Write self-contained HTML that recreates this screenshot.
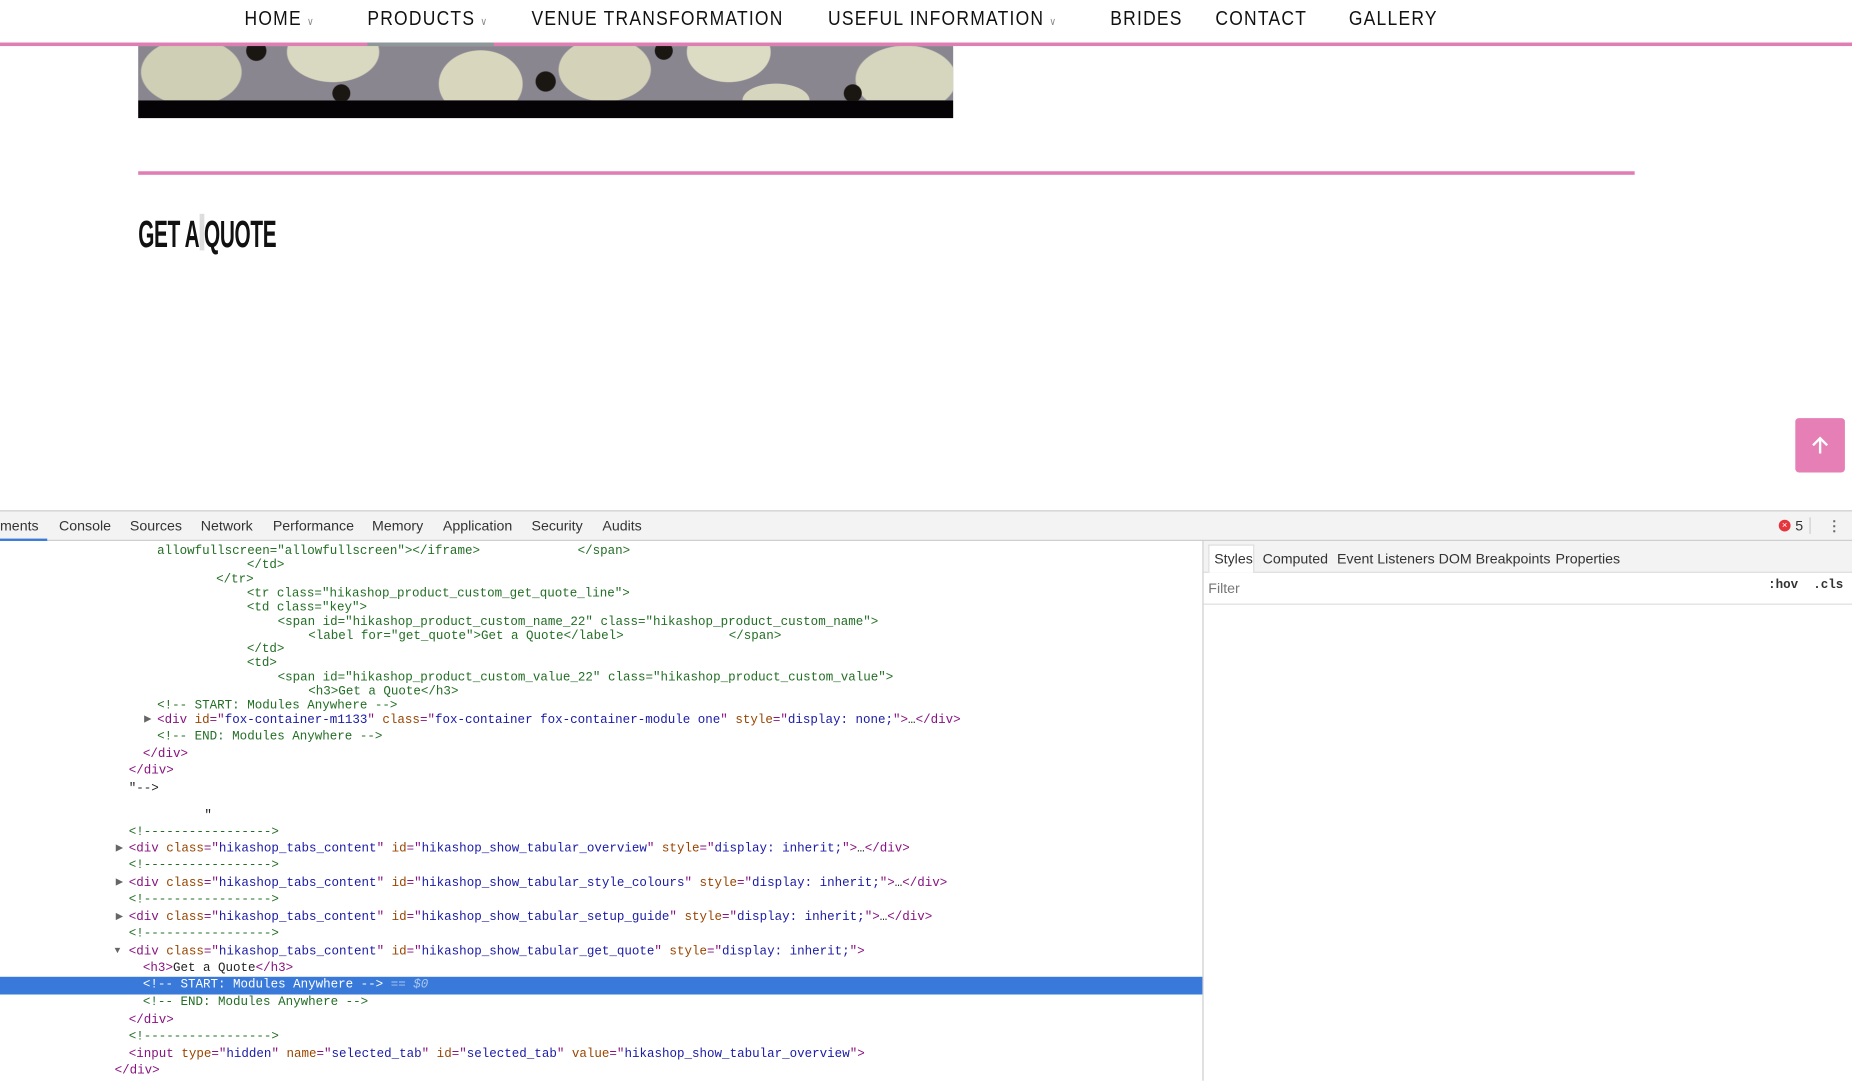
<!DOCTYPE html>
<html><head><meta charset="utf-8">
<style>
html,body{margin:0;padding:0;width:1852px;height:1080px;overflow:hidden;background:#fff}
#w{position:absolute;left:0;top:0;width:1568px;height:915px;transform:scale(1.18112);transform-origin:0 0;font-family:"Liberation Sans",sans-serif}
.a{position:absolute;white-space:pre}
.nav{font-size:17px;letter-spacing:1.2px;color:#111;top:6px;transform:scaleX(0.87);transform-origin:0 0}
.nav small{font-size:9px;color:#888;margin-left:5px;letter-spacing:0}
.code{position:absolute;left:0;top:2px;width:1018px;height:913px;font-family:"Liberation Mono",monospace;font-size:10.6px;line-height:14px;color:#222}
.c{color:#236e25}.t{color:#881280}.n{color:#994500}.v{color:#1a1aa6}
.tab{font-size:12px;color:#333;top:438px}
.st{font-size:12px;color:#333;top:466px}
</style></head><body><div id="w">
<!-- nav -->
<div class="a nav" style="left:207px">HOME<small>∨</small></div>
<div class="a nav" style="left:311px">PRODUCTS<small>∨</small></div>
<div class="a nav" style="left:450px">VENUE TRANSFORMATION</div>
<div class="a nav" style="left:701px">USEFUL INFORMATION<small>∨</small></div>
<div class="a nav" style="left:940px">BRIDES</div>
<div class="a nav" style="left:1029px">CONTACT</div>
<div class="a nav" style="left:1142px">GALLERY</div>
<div class="a" style="left:0;top:36px;width:1568px;height:3px;background:#e07db3"></div>
<div class="a" style="left:311px;top:36px;width:107px;height:3px;background:#8e9898"></div>
<!-- image -->
<div class="a" style="left:117px;top:39px;width:690px;height:46px;overflow:hidden;background:
radial-gradient(circle 9px at 100px 4px,#1a1612 90%,transparent),
radial-gradient(circle 9px at 345px 30px,#1a1612 90%,transparent),
radial-gradient(circle 8px at 445px 4px,#1a1612 90%,transparent),
radial-gradient(circle 8px at 172px 40px,#1a1612 90%,transparent),
radial-gradient(circle 8px at 605px 40px,#1a1612 90%,transparent),
radial-gradient(ellipse 60px 40px at 45px 22px,#cfcfb6 70%,transparent 72%),
radial-gradient(ellipse 55px 36px at 165px 5px,#d9d8c0 70%,transparent 72%),
radial-gradient(ellipse 50px 40px at 290px 32px,#d8d7bd 70%,transparent 72%),
radial-gradient(ellipse 55px 38px at 395px 20px,#d4d3ba 70%,transparent 72%),
radial-gradient(ellipse 50px 36px at 500px 5px,#dcdbc4 70%,transparent 72%),
radial-gradient(ellipse 60px 40px at 650px 28px,#d6d5be 70%,transparent 72%),
radial-gradient(ellipse 40px 20px at 540px 46px,#d6d5be 70%,transparent 72%),
#8a8690"></div>
<div class="a" style="left:117px;top:85px;width:690px;height:15px;background:#050306"></div>
<div class="a" style="left:117px;top:145px;width:1267px;height:3px;background:#e07db3"></div>
<div class="a" style="left:117px;top:180px;font-size:32px;font-weight:bold;color:#111;transform:scaleX(0.55);transform-origin:0 0;letter-spacing:-0.5px">GET A QUOTE</div>
<div class="a" style="left:169px;top:181px;width:4px;height:31px;background:#ddd"></div>
<div class="a" style="left:1520px;top:354px;width:42px;height:46px;background:#e57fb5;border-radius:3px"></div>
<svg class="a" style="left:1533px;top:369px" width="16" height="16" viewBox="0 0 16 16"><path d="M8 15V2M2 8l6-6 6 6" stroke="#fff" stroke-width="2" fill="none"/></svg>
<!-- devtools -->
<div class="a" style="left:0;top:432px;width:1568px;height:26px;background:#f3f3f3;border-top:1px solid #ccc;border-bottom:1px solid #ccc;box-sizing:border-box"></div>
<div class="a" style="left:0;top:456px;width:40px;height:2px;background:#3879d9"></div>
<div class="a tab" style="left:0">ments</div>
<div class="a tab" style="left:50px">Console</div>
<div class="a tab" style="left:110px">Sources</div>
<div class="a tab" style="left:170px">Network</div>
<div class="a tab" style="left:231px">Performance</div>
<div class="a tab" style="left:315px">Memory</div>
<div class="a tab" style="left:375px">Application</div>
<div class="a tab" style="left:450px">Security</div>
<div class="a tab" style="left:510px">Audits</div>
<div class="a" style="left:1506px;top:440px;width:10px;height:10px;border-radius:5px;background:#e5363e;color:#fff;font-size:8px;line-height:10px;text-align:center">×</div>
<div class="a tab" style="left:1520px">5</div>
<div class="a" style="left:1532px;top:438px;width:1px;height:14px;background:#ccc"></div>
<div class="a tab" style="left:1547px;font-weight:bold;color:#666">⋮</div>
<div class="a" style="left:1018px;top:458px;width:1px;height:457px;background:#ccc"></div>
<div class="a" style="left:1019px;top:458px;width:549px;height:27px;background:#f3f3f3;border-bottom:1px solid #ddd;box-sizing:border-box"></div>
<div class="a" style="left:1023px;top:461px;width:39px;height:24px;background:#fff;border:1px solid #ddd;border-bottom:none;box-sizing:border-box"></div>
<div class="a st" style="left:1028px">Styles</div>
<div class="a st" style="left:1069px">Computed</div>
<div class="a st" style="left:1132px">Event Listeners</div>
<div class="a st" style="left:1218px">DOM Breakpoints</div>
<div class="a st" style="left:1317px">Properties</div>
<div class="a" style="left:1023px;top:491px;font-size:12px;color:#777">Filter</div>
<div class="a" style="left:1497px;top:490px;font-family:'Liberation Mono',monospace;font-size:10.6px;font-weight:bold;color:#333">:hov  .cls</div>
<div class="a" style="left:1019px;top:511px;width:549px;height:1px;background:#ddd"></div>
<div class="a" style="left:0;top:827px;width:1018px;height:15px;background:#3879d9"></div>
<div class="code">
<div class="a c" style="left:133px;top:458px">allowfullscreen="allowfullscreen"&gt;&lt;/iframe&gt;             &lt;/span&gt;</div>
<div class="a c" style="left:209px;top:470px">&lt;/td&gt;</div>
<div class="a c" style="left:183px;top:482px">&lt;/tr&gt;</div>
<div class="a c" style="left:209px;top:494px">&lt;tr class="hikashop_product_custom_get_quote_line"&gt;</div>
<div class="a c" style="left:209px;top:506px">&lt;td class="key"&gt;</div>
<div class="a c" style="left:235px;top:518px">&lt;span id="hikashop_product_custom_name_22" class="hikashop_product_custom_name"&gt;</div>
<div class="a c" style="left:261px;top:530px">&lt;label for="get_quote"&gt;Get a Quote&lt;/label&gt;              &lt;/span&gt;</div>
<div class="a c" style="left:209px;top:541px">&lt;/td&gt;</div>
<div class="a c" style="left:209px;top:553px">&lt;td&gt;</div>
<div class="a c" style="left:235px;top:565px">&lt;span id="hikashop_product_custom_value_22" class="hikashop_product_custom_value"&gt;</div>
<div class="a c" style="left:261px;top:577px">&lt;h3&gt;Get a Quote&lt;/h3&gt;</div>
<div class="a c" style="left:133px;top:589px">&lt;!-- START: Modules Anywhere --&gt;</div>
<div class="a" style="left:122px;top:601px;color:#666;font-size:8px">▶</div>
<div class="a" style="left:133px;top:601px"><span class="t">&lt;div</span> <span class="n">id</span><span class="t">="</span><span class="v">fox-container-m1133</span><span class="t">"</span> <span class="n">class</span><span class="t">="</span><span class="v">fox-container fox-container-module one</span><span class="t">"</span> <span class="n">style</span><span class="t">="</span><span class="v">display: none;</span><span class="t">"</span><span class="t">&gt;</span>…<span class="t">&lt;/div&gt;</span></div>
<div class="a c" style="left:133px;top:615px">&lt;!-- END: Modules Anywhere --&gt;</div>
<div class="a t" style="left:121px;top:630px">&lt;/div&gt;</div>
<div class="a t" style="left:109px;top:644px">&lt;/div&gt;</div>
<div class="a" style="left:109px;top:659px">"--&gt;</div>
<div class="a" style="left:173px;top:682px">"</div>
<div class="a c" style="left:109px;top:696px">&lt;!-----------------&gt;</div>
<div class="a" style="left:98px;top:710px;color:#666;font-size:8px">▶</div>
<div class="a" style="left:109px;top:710px"><span class="t">&lt;div</span> <span class="n">class</span><span class="t">="</span><span class="v">hikashop_tabs_content</span><span class="t">"</span> <span class="n">id</span><span class="t">="</span><span class="v">hikashop_show_tabular_overview</span><span class="t">"</span> <span class="n">style</span><span class="t">="</span><span class="v">display: inherit;</span><span class="t">"&gt;</span>…<span class="t">&lt;/div&gt;</span></div>
<div class="a c" style="left:109px;top:724px">&lt;!-----------------&gt;</div>
<div class="a" style="left:98px;top:739px;color:#666;font-size:8px">▶</div>
<div class="a" style="left:109px;top:739px"><span class="t">&lt;div</span> <span class="n">class</span><span class="t">="</span><span class="v">hikashop_tabs_content</span><span class="t">"</span> <span class="n">id</span><span class="t">="</span><span class="v">hikashop_show_tabular_style_colours</span><span class="t">"</span> <span class="n">style</span><span class="t">="</span><span class="v">display: inherit;</span><span class="t">"&gt;</span>…<span class="t">&lt;/div&gt;</span></div>
<div class="a c" style="left:109px;top:753px">&lt;!-----------------&gt;</div>
<div class="a" style="left:98px;top:768px;color:#666;font-size:8px">▶</div>
<div class="a" style="left:109px;top:768px"><span class="t">&lt;div</span> <span class="n">class</span><span class="t">="</span><span class="v">hikashop_tabs_content</span><span class="t">"</span> <span class="n">id</span><span class="t">="</span><span class="v">hikashop_show_tabular_setup_guide</span><span class="t">"</span> <span class="n">style</span><span class="t">="</span><span class="v">display: inherit;</span><span class="t">"&gt;</span>…<span class="t">&lt;/div&gt;</span></div>
<div class="a c" style="left:109px;top:782px">&lt;!-----------------&gt;</div>
<div class="a" style="left:97px;top:797px;color:#666;font-size:8px">▼</div>
<div class="a" style="left:109px;top:797px"><span class="t">&lt;div</span> <span class="n">class</span><span class="t">="</span><span class="v">hikashop_tabs_content</span><span class="t">"</span> <span class="n">id</span><span class="t">="</span><span class="v">hikashop_show_tabular_get_quote</span><span class="t">"</span> <span class="n">style</span><span class="t">="</span><span class="v">display: inherit;</span><span class="t">"&gt;</span></div>
<div class="a" style="left:121px;top:811px"><span class="t">&lt;h3&gt;</span>Get a Quote<span class="t">&lt;/h3&gt;</span></div>
<div class="a" style="left:121px;top:825px;color:#fff">&lt;!-- START: Modules Anywhere --&gt; <span style="color:#aac6f0">== <i>$0</i></span></div>
<div class="a c" style="left:121px;top:840px">&lt;!-- END: Modules Anywhere --&gt;</div>
<div class="a t" style="left:109px;top:855px">&lt;/div&gt;</div>
<div class="a c" style="left:109px;top:869px">&lt;!-----------------&gt;</div>
<div class="a" style="left:109px;top:884px"><span class="t">&lt;input</span> <span class="n">type</span><span class="t">="</span><span class="v">hidden</span><span class="t">"</span> <span class="n">name</span><span class="t">="</span><span class="v">selected_tab</span><span class="t">"</span> <span class="n">id</span><span class="t">="</span><span class="v">selected_tab</span><span class="t">"</span> <span class="n">value</span><span class="t">="</span><span class="v">hikashop_show_tabular_overview</span><span class="t">"&gt;</span></div>
<div class="a t" style="left:97px;top:898px">&lt;/div&gt;</div>
</div>
</div></body></html>
